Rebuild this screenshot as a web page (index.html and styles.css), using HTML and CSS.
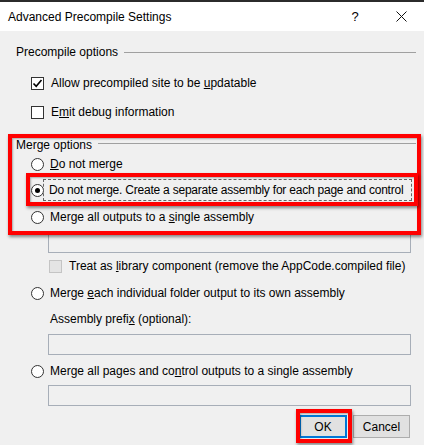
FILE: index.html
```html
<!DOCTYPE html>
<html>
<head>
<meta charset="utf-8">
<link rel="stylesheet" href="styles.css">
</head>
<body>
<div class="window">
  <div class="titlebar">
    <span class="title">Advanced Precompile Settings</span>
    <span class="help">?</span>
    <span class="close"><svg width="11" height="11" viewBox="0 0 11 11"><path d="M0.5 0.5 L10.5 10.5 M10.5 0.5 L0.5 10.5" stroke="#111" stroke-width="1" fill="none"/></svg></span>
  </div>
  <div class="content">
    <div class="group-head h1"><span>Precompile options</span><span class="rule"></span></div>
    <div class="option r-allow"><span class="check"><svg width="11" height="11" viewBox="0 0 11 11"><path d="M1.5 5.5 L4.2 8.3 L9.5 2" stroke="#000" stroke-width="1.6" fill="none"/></svg></span><span>Allow precompiled site to be <u>u</u>pdatable</span></div>
    <div class="option r-emit"><span class="check"></span><span>E<u>m</u>it debug information</span></div>
    <div class="group-head h2"><span>Merge options</span><span class="rule"></span></div>
    <div class="option r-dnm"><span class="radio"></span><span><u>D</u>o not merge</span></div>
    <div class="option r-dnm2"><span class="radio on"></span><span class="focus"><span>Do not merge. Create a separate assembly for each pa<u>g</u>e and control</span></span></div>
    <div class="option r-all"><span class="radio"></span><span>Merge all outputs to a <u>s</u>ingle assembly</span></div>
    <div class="textbox tb1"></div>
    <div class="option sub r-lib"><span class="check disabled"></span><span>Treat as <u>l</u>ibrary component (remove the AppCode.compiled file)</span></div>
    <div class="option r-each"><span class="radio"></span><span>Merge <u>e</u>ach individual folder output to its own assembly</span></div>
    <div class="label r-prefix"><span>Assembly prefi<u>x</u> (optional):</span></div>
    <div class="textbox tb2"></div>
    <div class="option r-pages"><span class="radio"></span><span>Merge all pages and co<u>n</u>trol outputs to a single assembly</span></div>
    <div class="textbox tb3"></div>
    <div class="buttons">
      <button class="btn default">OK</button>
      <button class="btn cancel">Cancel</button>
    </div>
  </div>
  <div class="mark mark-group"></div>
  <div class="mark mark-option"></div>
  <div class="mark mark-ok"></div>
</div>
</body>
</html>
```
FILE: styles.css
```css
* { box-sizing: border-box; }
html, body { margin: 0; padding: 0; }
body {
  font-family: "Liberation Sans", Arial, sans-serif;
  font-size: 12px;
  color: #000;
  background: #f0f0f0;
}
.window {
  position: relative;
  width: 424px;
  height: 445px;
  background: #f0f0f0;
  overflow: hidden;
}
.titlebar {
  height: 31px;
  border-top: 2px solid #2b2b2b;
  background: #fff;
  display: flex;
  align-items: center;
  padding-left: 8px;
}
.title { flex: 1; font-size: 12px; }
.help { width: 46px; text-align: center; font-size: 13px; }
.close { width: 46px; display: flex; justify-content: center; }
.content {
  display: flex;
  flex-direction: column;
}
.group-head {
  height: 20px;
  display: flex;
  align-items: center;
  padding-left: 16px;
  padding-right: 8px;
}
.group-head .rule {
  flex: 1;
  height: 1px;
  background: #a0a0a0;
  margin-left: 6px;
}
.h1 { margin-top: 11px; }
.h2 { margin-top: 14px; height: 18px; }
.h2 .rule { margin-top: -3px; }
.option {
  height: 20px;
  display: flex;
  align-items: center;
  padding-left: 31px;
  gap: 7px;
  white-space: nowrap;
}
.check {
  width: 13px;
  height: 13px;
  border: 1px solid #333;
  background: #fff;
  display: flex;
  align-items: center;
  justify-content: center;
  flex: none;
}
.check.disabled { background: #e4e4e4; border-color: #c4c4c4; }
.radio {
  width: 13px;
  height: 13px;
  border: 1px solid #333;
  border-radius: 50%;
  background: #fff;
  display: flex;
  align-items: center;
  justify-content: center;
  margin-right: -1px;
  flex: none;
}
.radio.on::after {
  content: "";
  width: 5px;
  height: 5px;
  border-radius: 50%;
  background: #000;
}
.r-allow { margin-top: 11px; }
.r-emit { margin-top: 9px; }
.r-dnm { margin-top: 0; }
.r-dnm2 { margin-top: 5px; height: 22px; gap: 0; }
.focus {
  border: 1px dashed #666;
  height: 22px;
  width: 369px;
  padding-left: 5px;
  display: flex;
  align-items: center;
  white-space: nowrap;
  letter-spacing: -0.22px;
  overflow: hidden;
}
.r-all { margin-top: 6px; }
.textbox {
  margin-left: 48px;
  width: 363px;
  height: 21px;
  border: 1px solid #a7aeb8;
  background: #f0f0f0;
}
.tb1 { margin-top: 5px; }
.sub { padding-left: 49px; }
.r-lib { margin-top: 3px; }
.r-each { margin-top: 7px; }
.label {
  height: 20px;
  display: flex;
  align-items: center;
  padding-left: 50px;
}
.r-prefix { margin-top: 6px; }
.tb2 { margin-top: 5px; }
.r-pages { margin-top: 6px; }
.tb3 { margin-top: 4px; }
.buttons {
  margin-top: 9px;
  display: flex;
  justify-content: flex-end;
  gap: 6px;
  padding-right: 14px;
}
.btn {
  font-family: inherit;
  font-size: 12px;
  height: 23px;
  background: #e1e1e1;
  border: 1px solid #adadad;
  color: #000;
  padding: 0;
}
.btn.default { width: 48px; border: 2px solid #0078d7; }
.btn.cancel { width: 57px; }
.mark {
  position: absolute;
  border: 4px solid #ff0000;
  box-shadow: 1px 2px 3px rgba(0,0,0,0.45), inset 1px 1px 2px rgba(0,0,0,0.3);
}
.mark-group { left: 8px; top: 134px; width: 413px; height: 101px; }
.mark-option { left: 26px; top: 173px; width: 392px; height: 33px; }
.mark-ok { left: 296px; top: 409px; width: 56px; height: 34px; }
```
